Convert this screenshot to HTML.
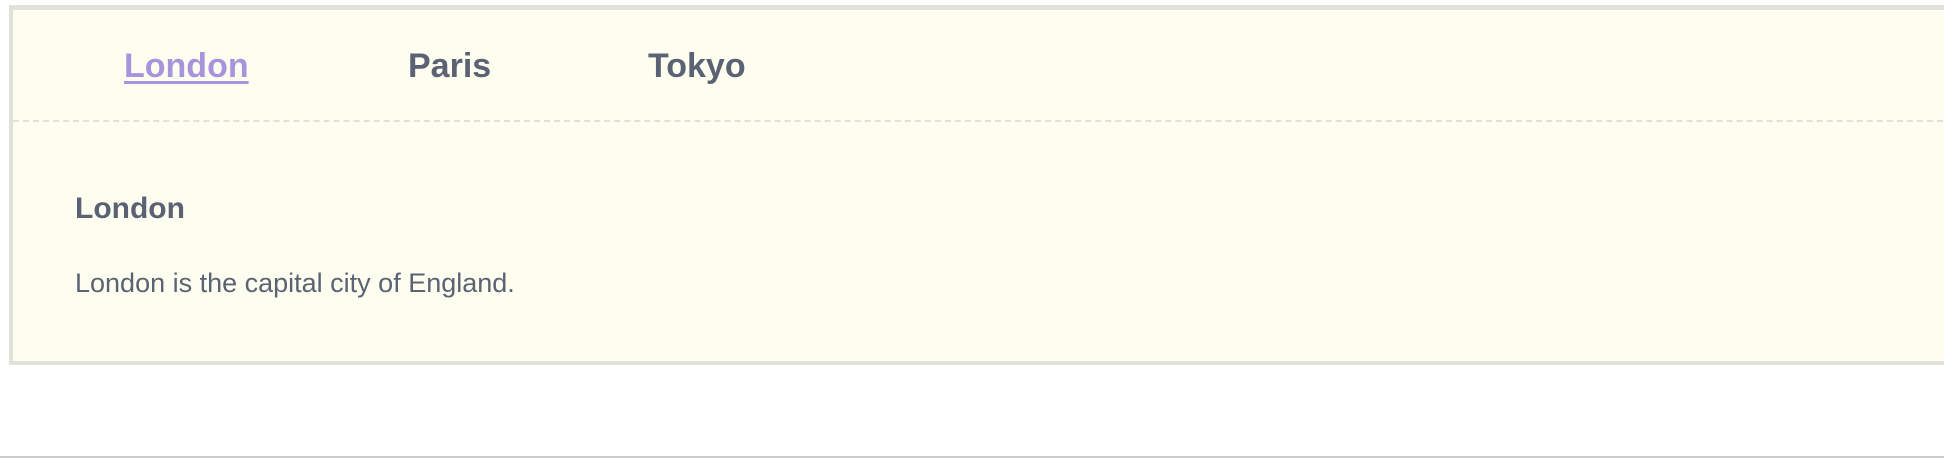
<!DOCTYPE html>
<html><head><style>
html,body{margin:0;padding:0;background:#fff;width:1944px;height:458px;overflow:hidden;font-family:"Liberation Sans",sans-serif;}
.box{position:absolute;left:9px;top:5px;width:1960px;height:351px;background:#fefef0;border:4px solid #e0e2da;border-top-width:5px;box-sizing:content-box;}
.tab{position:absolute;top:36px;font-size:34px;font-weight:bold;color:#5a6274;line-height:40px;}
.act{color:#a893dd;text-decoration:underline;text-decoration-thickness:3px;text-underline-offset:4px;}
.dash{position:absolute;left:0;right:0;top:110px;border-top:2px dashed #e0e2da;}
h3{position:absolute;left:62px;top:181px;margin:0;font-size:30px;color:#5a6274;line-height:36px;}
p{position:absolute;left:62px;top:257px;margin:0;font-size:27px;color:#5a6274;line-height:32px;}
.bl{position:absolute;left:0;top:456px;width:1944px;height:2px;background:#ccc;}
</style></head><body>
<div class="box">
<span class="tab act" style="left:111px">London</span>
<span class="tab" style="left:395px">Paris</span>
<span class="tab" style="left:635px">Tokyo</span>
<div class="dash"></div>
<h3>London</h3>
<p>London is the capital city of England.</p>
</div>
<div class="bl"></div>
</body></html>
